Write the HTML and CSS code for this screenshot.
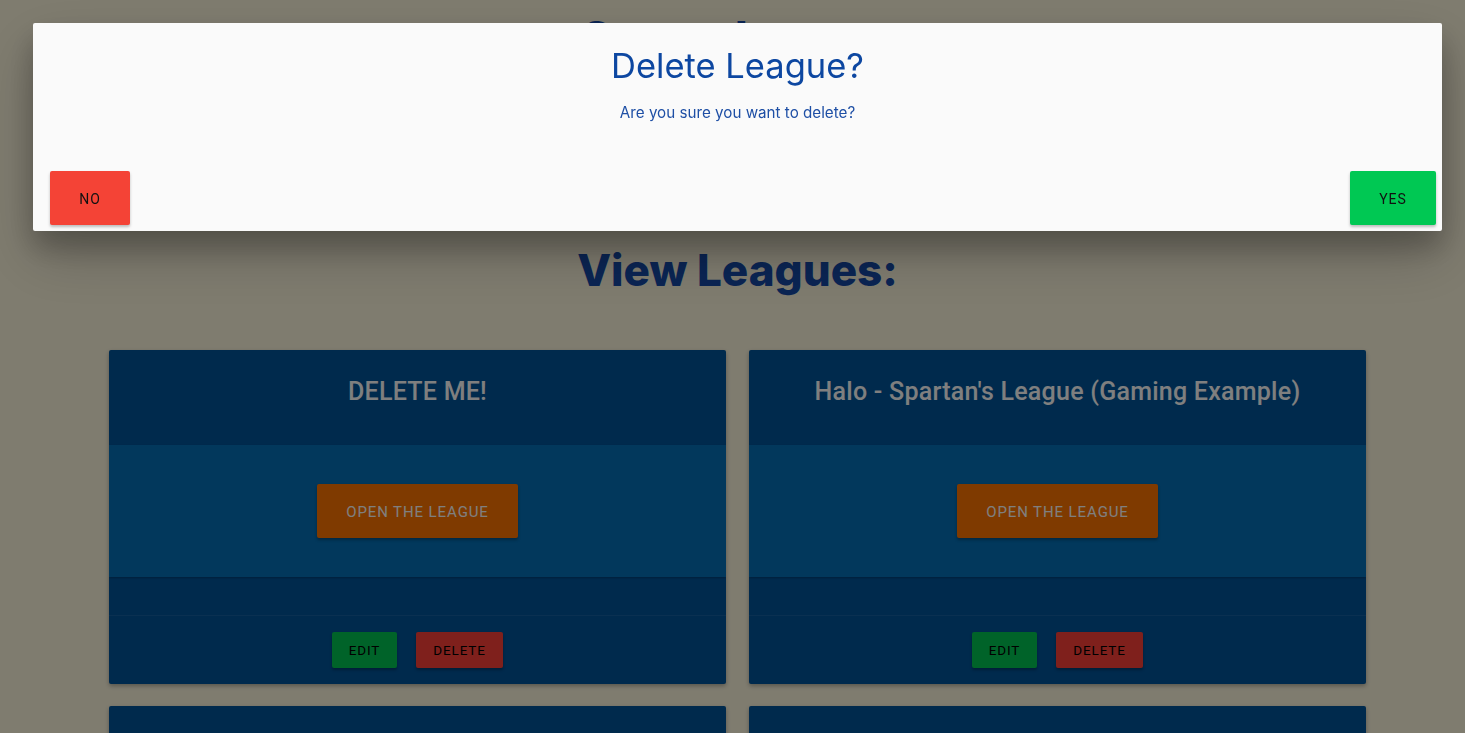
FILE: index.html
```html
<!DOCTYPE html>
<html>
<head>
<meta charset="utf-8">
<link rel="stylesheet" href="styles.css">
</head>
<body>
<div class="page">
  <h1 class="page-title top">Create League</h1>
  <div class="spacer"></div>
  <h1 class="page-title">View Leagues:</h1>
  <div class="grid">
    <div class="card">
      <div class="card-head">DELETE ME!</div>
      <div class="card-body"><button class="btn-open">OPEN THE LEAGUE</button></div>
      <div class="card-strip"></div>
      <div class="card-actions"><button class="btn-sm edit">EDIT</button><button class="btn-sm del">DELETE</button></div>
    </div>
    <div class="card">
      <div class="card-head">Halo - Spartan's League (Gaming Example)</div>
      <div class="card-body"><button class="btn-open">OPEN THE LEAGUE</button></div>
      <div class="card-strip"></div>
      <div class="card-actions"><button class="btn-sm edit">EDIT</button><button class="btn-sm del">DELETE</button></div>
    </div>
    <div class="card">
      <div class="card-head"></div>
    </div>
    <div class="card">
      <div class="card-head"></div>
    </div>
  </div>
</div>
<div class="overlay"></div>
<div class="modal">
  <div class="modal-content">
    <h4 class="modal-title">Delete League?</h4>
    <p class="modal-text">Are you sure you want to delete?</p>
  </div>
  <div class="modal-footer">
    <button class="btn-modal no">NO</button>
    <button class="btn-modal yes">YES</button>
  </div>
</div>
</body>
</html>
```
FILE: styles.css
```css
html, body { margin: 0; padding: 0; }
body {
  background: #fef8df;
  font-family: Inter, "Noto Sans", sans-serif;
  overflow: hidden;
  height: 733px;
}
.page {
  padding-left: 10px;
}
.page-title {
  margin: 0;
  text-align: center;
  font-family: Inter, sans-serif;
  font-weight: 800;
  font-size: 44px;
  line-height: 50px;
  color: #154aa8;
}
.page-title.top { padding-top: 12px; }
.spacer { height: 183px; }
.grid {
  display: grid;
  grid-template-columns: 617px 617px;
  gap: 22px 23px;
  margin-top: 55px;
  margin-left: 99px;
}
.card {
  background: #00549b;
  border-radius: 2px;
  box-shadow: 0 2px 4px rgba(0,0,0,0.3);
  overflow: hidden;
}
.card-head {
  height: 95px;
  box-sizing: border-box;
  padding-top: 27px;
  text-align: center;
  font-family: Roboto, sans-serif;
  font-weight: 500;
  font-size: 25px;
  line-height: 30px;
  color: #ffffff;
  letter-spacing: 0.25px;
}
.card-body {
  background: #0470b8;
  height: 132px;
  display: flex;
  align-items: center;
  justify-content: center;
  box-shadow: 0 1px 2px rgba(0,0,0,0.25);
  position: relative;
}
.btn-open {
  width: 201px;
  height: 54px;
  border: none;
  border-radius: 2px;
  background: #ff7400;
  color: #ffffff;
  font-family: Roboto, sans-serif;
  font-size: 15px;
  letter-spacing: 0.9px;
  padding: 2px 0 0;
  box-shadow: 0 2px 3px rgba(0,0,0,0.3);
}
.card-strip {
  height: 38px;
  border-bottom: 1px solid rgba(255,255,255,0.08);
}
.card-actions {
  height: 68px;
  display: flex;
  justify-content: center;
  align-items: flex-start;
  padding-top: 16px;
  box-sizing: border-box;
  gap: 19px;
}
.btn-sm {
  height: 36px;
  border: none;
  border-radius: 2px;
  font-family: Roboto, sans-serif;
  font-size: 13.5px;
  letter-spacing: 0.9px;
  color: #000;
  box-shadow: 0 2px 3px rgba(0,0,0,0.3);
  padding: 0;
}
.btn-sm.edit { width: 65px; background: #00c652; }
.btn-sm.del { width: 87px; background: #ff4039; }
.overlay {
  position: fixed;
  inset: 0;
  background: rgba(0,0,0,0.5);
}
.modal {
  position: fixed;
  top: 23px;
  left: 33px;
  width: 1409px;
  height: 208px;
  background: #fafafa;
  border-radius: 2px;
  box-shadow: 0 16px 28px rgba(0,0,0,0.22), 0 25px 55px rgba(0,0,0,0.21);
  display: flex;
  flex-direction: column;
  box-sizing: border-box;
}
.modal-content {
  flex: 1;
  text-align: center;
  padding-top: 23px;
}
.modal-title {
  margin: 0;
  font-family: Inter, sans-serif;
  font-weight: 400;
  font-size: 34.5px;
  line-height: 40px;
  color: #0d47a1;
}
.modal-text {
  margin: 17px 0 0;
  font-family: Inter, sans-serif;
  font-size: 15.2px;
  line-height: 20px;
  color: #1e4fa5;
}
.modal-footer {
  display: flex;
  justify-content: space-between;
  padding: 0 6px 6px 17px;
}
.btn-modal {
  height: 54px;
  border: none;
  border-radius: 2px;
  font-family: Roboto, sans-serif;
  font-size: 14px;
  letter-spacing: 1px;
  color: #111;
  box-shadow: 0 2px 3px rgba(0,0,0,0.25);
  padding: 1px 0 0;
}
.btn-modal.no { width: 80px; background: #f44336; }
.btn-modal.yes { width: 86px; background: #00c853; }
```
